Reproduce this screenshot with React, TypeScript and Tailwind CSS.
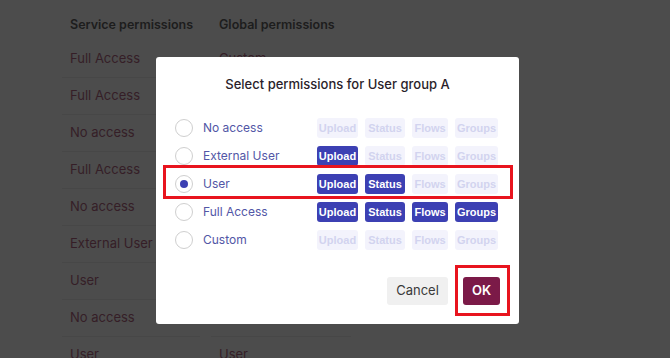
import React, { useState } from "react";

const ROWS = [
  { service: "Full Access", global: "Custom" },
  { service: "Full Access", global: "Custom" },
  { service: "No access", global: "User" },
  { service: "Full Access", global: "Full Access" },
  { service: "No access", global: "No access" },
  { service: "External User", global: "User" },
  { service: "User", global: "User" },
  { service: "No access", global: "No access" },
  { service: "User", global: "User" },
];

const OPTIONS = [
  { label: "No access", perms: 0 },
  { label: "External User", perms: 1 },
  { label: "User", perms: 2 },
  { label: "Full Access", perms: 4 },
  { label: "Custom", perms: 0 },
];

const BADGES = [
  { label: "Upload", w: "w-[41px]" },
  { label: "Status", w: "w-[40px]" },
  { label: "Flows", w: "w-[36px]" },
  { label: "Groups", w: "w-[43px]" },
];

const Badge = ({ label, w, on }: { label: string; w: string; on: boolean }) => (
  <span
    className={`${w} h-[20px] rounded-[3px] flex items-center justify-center font-['Liberation_Sans',Arial,sans-serif] text-[11px] font-bold leading-none ${
      on ? "bg-[#3c40b3] text-white" : "bg-[#f3f3fc] text-[#d2d3ef]"
    }`}
  >
    {label}
  </span>
);

export default function App() {
  const [selected, setSelected] = useState(2);

  return (
    <div className="relative w-[670px] h-[358px] overflow-hidden bg-[#4c4c4c] font-['Inter',sans-serif]">
      {/* ── table behind the overlay ── */}
      <div className="pl-[62px] pt-[16px]">
        <div className="flex h-[25px] items-start text-[12.5px] font-semibold text-[#1d1d1d]">
          <div className="w-[149px] pl-[8px]">Service permissions</div>
          <div className="pl-[8px]">Global permissions</div>
        </div>
        {ROWS.map((r, i) => (
          <div key={i} className="flex h-[37px]">
            <div className="w-[138px] mr-[11px] flex items-center pl-[8px] border-b border-[#474747] text-[13px] text-[#351e27]">
              {r.service}
            </div>
            <div className="w-[140px] flex items-center pl-[8px] border-b border-[#474747] text-[13px] text-[#351e27]">
              {r.global}
            </div>
          </div>
        ))}
      </div>

      {/* ── modal ── */}
      <div className="absolute left-[156px] top-[57px] w-[363px] h-[267px] bg-white rounded-[3px] flex flex-col">
        <h2 className="h-[54px] flex items-center justify-center text-[13px] font-medium text-[#2a1e2a] pt-[1px]">
          Select permissions for User group A
        </h2>

        <div className="flex flex-col pl-[19px] pt-[3px]">
          {OPTIONS.map((o, i) => (
            <div
              key={o.label}
              className="flex items-center h-[28px] cursor-pointer"
              onClick={() => setSelected(i)}
            >
              <span className="w-[18px] h-[18px] rounded-full border border-[#cfcfcf] flex items-center justify-center">
                {selected === i && <span className="w-[8px] h-[8px] rounded-full bg-[#3c40b3]" />}
              </span>
              <span className="ml-[10px] w-[114px] text-[12px] text-[#5256a6]">{o.label}</span>
              <div className="flex gap-[7px]">
                {BADGES.map((b, j) => (
                  <Badge key={b.label} label={b.label} w={b.w} on={j < o.perms} />
                ))}
              </div>
            </div>
          ))}
        </div>

        <div className="mt-auto flex justify-end gap-[15px] pr-[19px] pb-[19px]">
          <button className="w-[61px] h-[28px] rounded-[3px] bg-[#f0f0f0] text-[13px] text-[#3a3a3a]">
            Cancel
          </button>
          <button className="relative w-[37px] h-[28px] rounded-[3px] bg-[#7b1a48] text-[13px] font-semibold text-white">
            OK
            <span className="absolute -left-[8px] -top-[12px] w-[55px] h-[51px] border-[3px] border-[#e8141e]" />
          </button>
        </div>

        {/* highlight around selected row */}
        <div className="absolute left-[7px] top-[108px] w-[350px] h-[34px] border-[3px] border-[#e8141e] pointer-events-none" />
      </div>
    </div>
  );
}
